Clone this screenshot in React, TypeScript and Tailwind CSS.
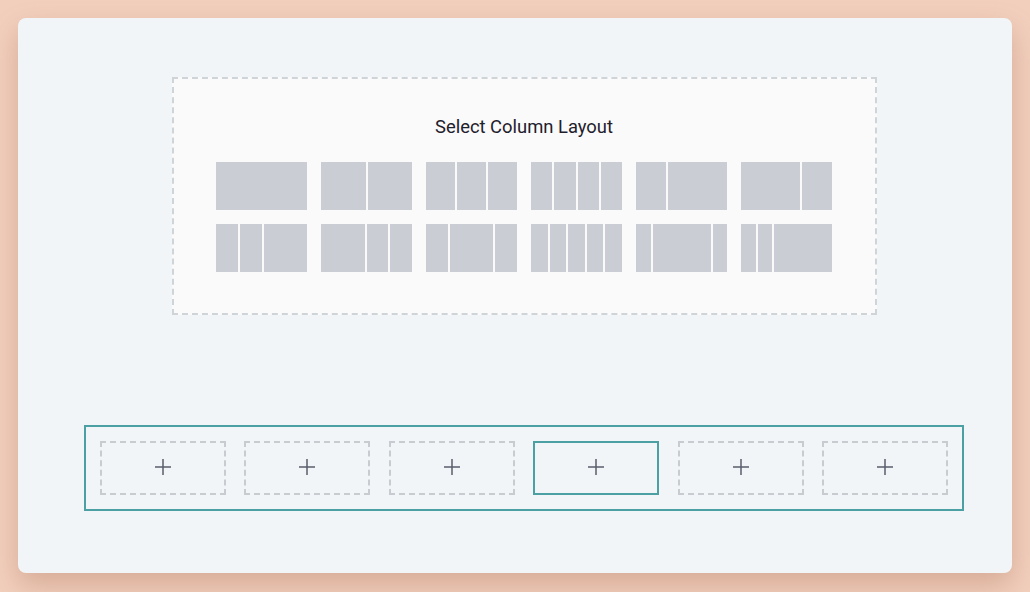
import React from "react";

// Each layout is a list of relative column widths
const layouts: number[][] = [
  [1],
  [1, 1],
  [1, 1, 1],
  [1, 1, 1, 1],
  [1, 2],
  [2, 1],
  [1, 1, 2],
  [2, 1, 1],
  [1, 2, 1],
  [1, 1, 1, 1, 1],
  [1, 4, 1],
  [1, 1, 4],
];

function LayoutIcon({ cols }: { cols: number[] }) {
  return (
    <div className="flex h-[48px] w-[91px] gap-[2px] cursor-pointer">
      {cols.map((c, i) => (
        <div
          key={i}
          className="h-full bg-[#cacdd3]"
          style={{ flexGrow: c, flexBasis: 0 }}
        />
      ))}
    </div>
  );
}

function Plus() {
  return (
    <svg width="16" height="16" viewBox="0 0 16 16" className="-mt-[2px] text-[#5a5d6c]">
      <path d="M8 0v16M0 8h16" stroke="currentColor" strokeWidth="1.5" fill="none" />
    </svg>
  );
}

export default function App() {
  return (
    <div
      className="w-[1030px] h-[592px] bg-[#f2cfbd] p-[18px]"
      style={{ fontFamily: "Roboto, 'Liberation Sans', sans-serif" }}
    >
      <div className="h-[555px] w-[994px] rounded-[8px] bg-[#f2f5f7] pt-[59px] shadow-[0_12px_28px_rgba(140,80,50,0.28)]">
        <div className="ml-[154px] flex h-[238px] w-[705px] flex-col border-2 border-dashed border-[#cfd4d8] bg-[#fafafa] pt-[36px] pl-[42px]">
          <h2 className="w-[616px] text-center text-[18.4px] leading-[24px] text-[#1f202c]">
            Select Column Layout
          </h2>
          <div className="mt-[23px] grid w-[616px] grid-cols-6 gap-[14px]">
            {layouts.map((l, i) => (
              <LayoutIcon key={i} cols={l} />
            ))}
          </div>
        </div>

        <div className="ml-[66px] mt-[110px] grid w-[880px] grid-cols-6 gap-x-[18.4px] border-2 border-[#4aa0a2] p-[14px]">
          {Array.from({ length: 6 }).map((_, i) => (
            <div
              key={i}
              className={
                i === 3
                  ? "flex h-[54px] items-center justify-center border-2 border-[#4aa0a2]"
                  : "flex h-[54px] items-center justify-center border-2 border-dashed border-[#c8ccd1]"
              }
            >
              <Plus />
            </div>
          ))}
        </div>
      </div>
    </div>
  );
}
